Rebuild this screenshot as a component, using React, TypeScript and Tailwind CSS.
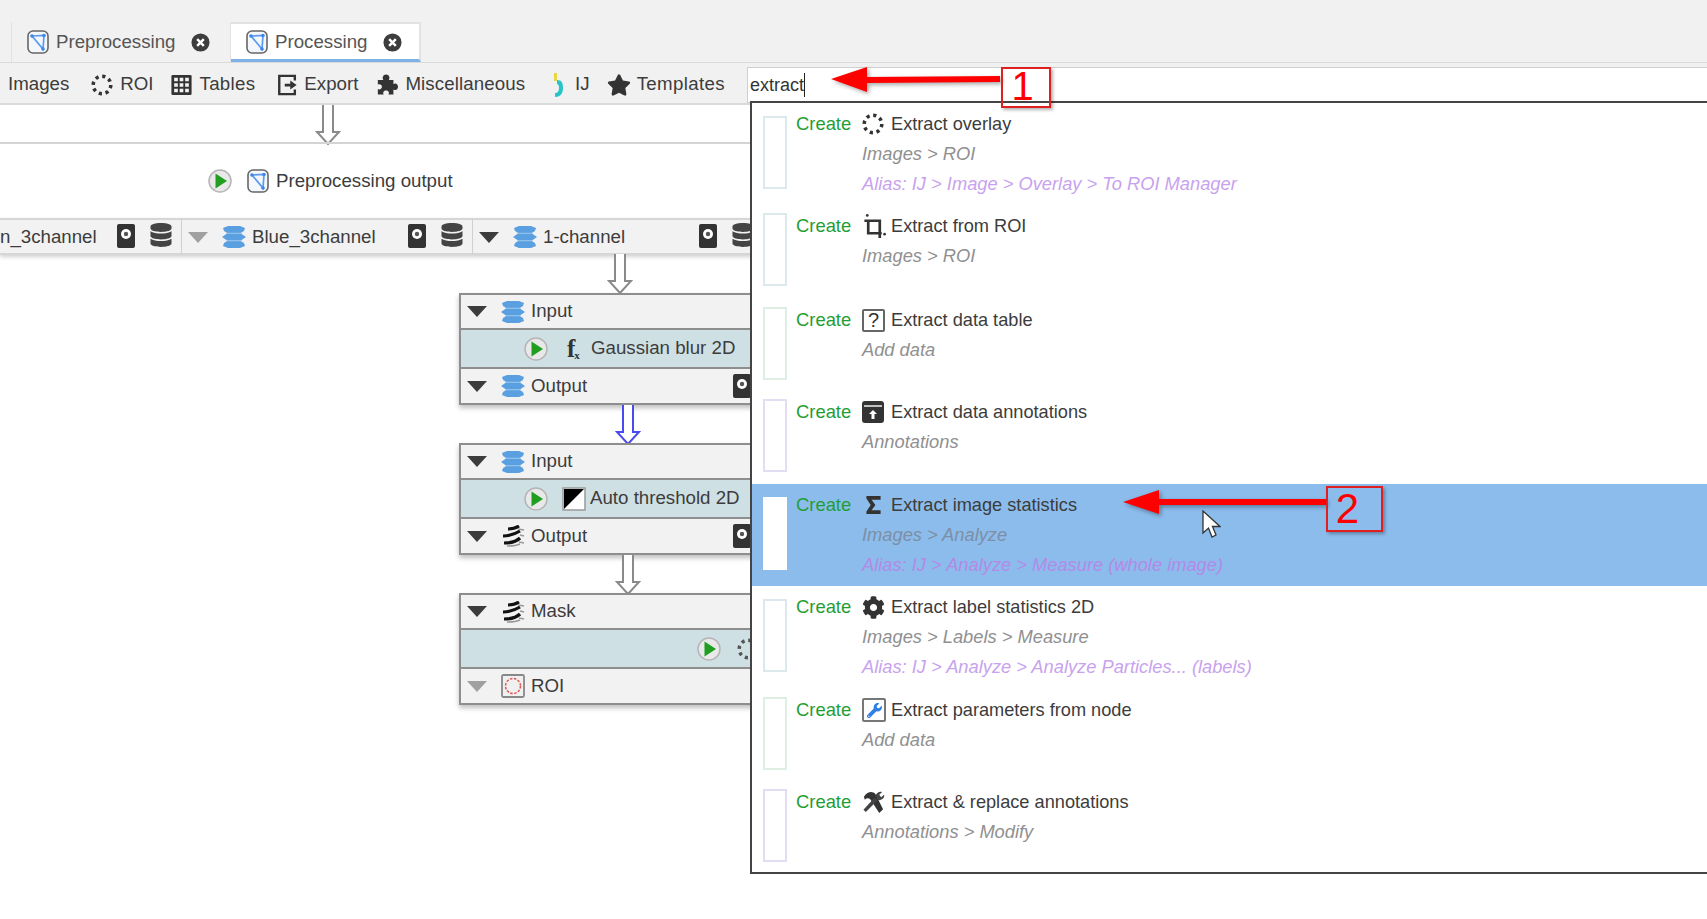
import React from "react";
import { FaDatabase, FaStar, FaCog, FaWrench } from "react-icons/fa";

const FlowIcon = ({ className = "" }: { className?: string }) => (
  <svg viewBox="0 0 24 24" className={`w-6 h-6 shrink-0 ${className}`}>
    <rect x="2" y="1" width="20" height="22" rx="5" fill="#f4f7fb" stroke="#666" strokeWidth="1.6" />
    <path d="M6 6 L18 5.500 L17 19 L6 6 Z" fill="none" stroke="#5b9cf0" strokeWidth="1.7" />
    <circle cx="18" cy="5.500" r="1.800" fill="#3f86e8" />
    <circle cx="6" cy="6" r="1.800" fill="#3f86e8" />
    <circle cx="17" cy="19" r="1.800" fill="#3f86e8" />
  </svg>
);
const Close = () => (
  <svg viewBox="0 0 20 20" className="w-[19px] h-[19px] shrink-0">
    <circle cx="10" cy="10" r="9.500" fill="#3d3d3d" />
    <path d="M6.500 6.500 L13.500 13.500 M13.500 6.500 L6.500 13.500" stroke="#fff" strokeWidth="2.600" />
  </svg>
);
const RoiDots = ({ className = "w-[22px] h-[22px]", color = "#333" }: { className?: string; color?: string }) => (
  <svg viewBox="0 0 22 22" className={`${className} shrink-0`}>
    <circle cx="11" cy="11" r="8.800" fill="none" stroke={color} strokeWidth="3.500" strokeDasharray="3.200 3.700" />
  </svg>
);
const TableIcon = () => (
  <svg viewBox="0 0 22 24" className="w-[21px] h-[22px] shrink-0">
    <rect x="0" y="1" width="22" height="22" rx="1.500" fill="#333" />
    <path d="M3 4h4v4H3zM9 4h4v4H9zM15 4h4v4h-4zM3 10h4v4H3zM9 10h4v4H9zM15 10h4v4h-4zM3 16h4v4H3zM9 16h4v4H9zM15 16h4v4h-4z" fill="#f2f2f2" />
  </svg>
);
const ExportIcon = () => (
  <svg viewBox="0 0 22 24" className="w-[21px] h-[22px] shrink-0">
    <path d="M19 7V2H2v20h17v-5" fill="none" stroke="#333" strokeWidth="2.600" />
    <path d="M8 10.500h6V7l7 5-7 5v-3.500H8z" fill="#333" />
  </svg>
);
const Puzzle = () => (
  <svg viewBox="0 0 24 24" className="w-[22px] h-[23px] shrink-0">
    <path
      d="M2 7 H8 C6.500 4.500 7.500 1 11 1 C14.500 1 15.500 4.500 14 7 H19 V11.500 C21.500 10 24 11.500 24 14.500 C24 17.500 21.500 19 19 17.500 V23 H13.500 C15 20.500 13.500 18.500 11 18.500 C8.500 18.500 7 20.500 8.500 23 H2 V17 C4.500 18 6.500 16.500 6.500 14.500 C6.500 12.500 4.500 11 2 12 Z"
      fill="#333"
    />
  </svg>
);
const IjIcon = () => (
  <svg viewBox="0 0 12 26" className="w-[12px] h-[26px] shrink-0">
    <path d="M2 1h3v8H2z" fill="#e8d840" />
    <path d="M5 8c5 0 6 3 6 8 0 6-3 9-8 9v-4c2 0 4-1 4-5 0-3-1-4-2-4z" fill="#27c4c9" />
  </svg>
);
const Layers = () => (
  <svg viewBox="0 0 24 22" className="w-6 h-[22px] shrink-0">
    <path d="M6 0h12l5 2 -1 3 -4 2.500H6L2 5 1 2z" fill="#5a9fe0" />
    <path d="M5 7.500h14l5 3.500-5 3.500H5l-5-3.500z" fill="#5a9fe0" />
    <path d="M6 14.500h12l4 2.500 1 3-5 2H6l-5-2 1-3z" fill="#5a9fe0" />
    <path d="M4 7.200h16M4 14.800h16" stroke="#9cc6ee" strokeWidth="0.800" />
  </svg>
);
const MaskLayers = () => (
  <svg viewBox="0 0 24 22" className="w-6 h-[22px] shrink-0">
    <path d="M7 4c4 0 8-1 11-3M2 11c6 0 12-2 17-5M3 18c6 0 12-1 16-5" fill="none" stroke="#111" strokeWidth="3.200" />
    <path d="M17 4l6 1M19 10l4 1M18 17l5 1M6 21c5 0 9 0 13-2" fill="none" stroke="#999" strokeWidth="1.400" />
  </svg>
);
const Snapshot = () => (
  <svg viewBox="0 0 18 24" className="w-[18px] h-[24px] shrink-0">
    <rect x="0" y="0" width="18" height="24" rx="2" fill="#333" />
    <circle cx="9" cy="10" r="5" fill="#fff" />
    <circle cx="9" cy="10" r="2.200" fill="#555" />
  </svg>
);
const Play = () => (
  <svg viewBox="0 0 24 24" className="w-6 h-6 shrink-0">
    <circle cx="12" cy="12" r="11" fill="#e9e9e9" stroke="#b5b5b5" strokeWidth="1.500" />
    <path d="M7.500 4.500 L19 12 L7.500 19.500 Z" fill="#1f9e1f" />
  </svg>
);
const Tri = ({ gray = false }: { gray?: boolean }) => (
  <svg viewBox="0 0 20 11" className="w-5 h-[11px] shrink-0">
    <path d="M0 0 H20 L10 11 Z" fill={gray ? "#a0a0a0" : "#3c3c3c"} />
  </svg>
);
const FlowArrow = ({ blue = false, className = "" }: { blue?: boolean; className?: string }) => (
  <svg viewBox="0 0 26 40" className={`w-[26px] h-[40px] ${className}`}>
    <path
      d="M8 0 V27 H2 L13 39 L24 27 H18 V0"
      fill="#fff"
      stroke={blue ? "#4a4af0" : "#8a8a8a"}
      strokeWidth="2"
    />
  </svg>
);
const FxIcon = () => (
  <span className="flex items-end w-[16px] font-['Liberation_Serif',serif] font-bold text-[#333] leading-none">
    <span className="text-[25px]">f</span>
    <span className="text-[11px] -ml-[1px]">x</span>
  </span>
);
const ThresholdIcon = () => (
  <svg viewBox="0 0 24 24" className="w-[24px] h-[24px] shrink-0">
    <rect x="1" y="1" width="22" height="22" fill="#fff" stroke="#999" strokeWidth="1.500" />
    <path d="M2 2 H22 L2 22 Z" fill="#000" />
  </svg>
);
const RoiBox = () => (
  <svg viewBox="0 0 24 24" className="w-[24px] h-[24px] shrink-0">
    <rect x="1" y="1" width="22" height="22" rx="1.500" fill="#f0f0f0" stroke="#888" strokeWidth="1.800" />
    <circle cx="12" cy="12" r="7.500" fill="none" stroke="#e25555" strokeWidth="1.500" strokeDasharray="2.500 1.500" />
  </svg>
);

const Crop = () => (
  <svg viewBox="0 0 24 26" className="w-[24px] h-[25px]">
    <path d="M6 6 V20 H20 M2 7 H18 V25" fill="none" stroke="#333" strokeWidth="2.800" />
    <circle cx="5" cy="1.500" r="1.400" fill="#333" />
    <circle cx="23" cy="21" r="1.400" fill="#333" />
  </svg>
);
const Question = () => (
  <span className="flex items-center justify-center w-[23px] h-[23px] border-2 border-[#666] rounded-[2px] text-[20px] text-[#333]">?</span>
);
const Archive = () => (
  <svg viewBox="0 0 22 22" className="w-[22px] h-[22px]">
    <path d="M3 0h16a3 3 0 0 1 3 3v16a3 3 0 0 1-3 3H3a3 3 0 0 1-3-3V3a3 3 0 0 1 3-3z" fill="#333" />
    <path d="M2 5h18" stroke="#fff" strokeWidth="1.400" />
    <path d="M11 9l-4 4h2.500v5h3v-5H15z" fill="#fff" />
  </svg>
);
const Sigma = () => (
  <svg viewBox="0 0 18 22" className="w-[17px] h-[22px] ml-[3px]">
    <path d="M1.500 1.500H16.500V5.500H7L11 11 7 16.500H16.500V20.500H1.500V18L6 11 1.500 4z" fill="#333" />
  </svg>
);
const WrenchBox = () => (
  <span className="flex items-center justify-center w-[24px] h-[24px] border-2 border-[#777] rounded-[2px] bg-white text-[#2f80e4]">
    <FaWrench size={15} />
  </span>
);
const Tools = () => (
  <svg viewBox="0 0 24 24" className="w-[23px] h-[23px]">
    <path d="M2 6 C6 0 11 0 14 3 L22 19 L18 23 L9 9 C7 7 5 7 3 9 Z" fill="#333" />
    <path d="M16 10 L4 22 L1.500 19.500 L13 7 Z" fill="#444" />
    <path d="M14 5 C15 2 18 0 21 1 L18 4 L20 6.500 L23 4 C24 7 21 10 17 9.500 Z" fill="#444" />
  </svg>
);

type Row = {
  cls: string;
  box: string;
  icon: React.ReactNode;
  name: string;
  path: string;
  alias?: string;
  active?: boolean;
};
const rows: Row[] = [
  { cls: "h-[97px]", box: "border-[#dbe9ec]", icon: <RoiDots />, name: "Extract overlay", path: "Images > ROI", alias: "Alias: IJ > Image > Overlay > To ROI Manager" },
  { cls: "h-[94px]", box: "border-[#dbe9ec]", icon: <Crop />, name: "Extract from ROI", path: "Images > ROI" },
  { cls: "h-[92px]", box: "border-[#dcefe2]", icon: <Question />, name: "Extract data table", path: "Add data" },
  { cls: "h-[98px]", box: "border-[#e2ddf2]", icon: <Archive />, name: "Extract data annotations", path: "Annotations" },
  { cls: "h-[102px] bg-[#8bbcec]", box: "border-white bg-white", icon: <Sigma />, name: "Extract image statistics", path: "Images > Analyze", alias: "Alias: IJ > Analyze > Measure (whole image)", active: true },
  { cls: "h-[98px]", box: "border-[#dbe9ec]", icon: <FaCog size={23} color="#333" />, name: "Extract label statistics 2D", path: "Images > Labels > Measure", alias: "Alias: IJ > Analyze > Analyze Particles... (labels)" },
  { cls: "h-[92px]", box: "border-[#dcefe2]", icon: <WrenchBox />, name: "Extract parameters from node", path: "Add data" },
  { cls: "h-[97px]", box: "border-[#e2ddf2]", icon: <Tools />, name: "Extract & replace annotations", path: "Annotations > Modify" },
];

const NodeHeader = ({ icon, label, tri, snap, h }: { icon: React.ReactNode; label: string; tri?: boolean; snap?: boolean; h: string }) => (
  <div className={`${h} flex items-center pl-[6px] bg-[#f2f2f2]`}>
    <Tri gray={tri} />
    <span className="ml-[14px]">{icon}</span>
    <span className="ml-[6px]">{label}</span>
    {snap && <span className="ml-auto mr-[26px] flex"><Snapshot /></span>}
  </div>
);

const Node = ({ top, children }: { top: string; children: React.ReactNode }) => (
  <div className={`absolute left-[459px] w-[320px] ${top} border-2 border-[#8e8e8e] shadow-[0_3px_5px_rgba(0,0,0,0.25)]`}>
    {children}
  </div>
);
const NodeMid = ({ children }: { children: React.ReactNode }) => (
  <div className="h-[41px] flex items-center bg-[#cfe0e4] border-y-2 border-[#8e8e8e]">{children}</div>
);

const Cell = ({ icon, label, left, tri }: { icon: React.ReactNode; label: string; left: string; tri?: boolean }) => (
  <div className={`absolute top-[114px] h-[36px] flex items-center ${left}`}>
    <Tri gray={tri} />
    <span className="ml-[14px]">{icon}</span>
    <span className="ml-[6px]">{label}</span>
  </div>
);

export default function App() {
  return (
    <div className="relative h-[919px] w-[1707px] overflow-hidden bg-white text-[#3c3c3c] font-['Liberation_Sans',Arial,sans-serif] text-[18.700px]">
      {/* Tabs */}
      <div className="h-[62px] bg-[#f1f1f1] flex items-end pl-[11px]">
        <div className="h-[40px] w-[220px] flex items-center pl-[14px] border-x border-[#e2e2e2]">
          <FlowIcon />
          <span className="ml-[6px] text-[#555]">Preprocessing</span>
          <span className="ml-[16px] flex"><Close /></span>
        </div>
        <div className="h-[40px] w-[190px] flex items-center pl-[14px] pt-[1px] bg-white border-t-2 border-r-2 border-[#e2e2e2] border-b-[3px] border-b-[#7fb2e8]">
          <FlowIcon />
          <span className="ml-[6px] text-[#555]">Processing</span>
          <span className="ml-[16px] flex"><Close /></span>
        </div>
      </div>

      {/* Toolbar */}
      <div className="h-[43px] bg-[#f1f1f1] border-t border-b-2 border-[#dadada] flex items-center pl-[8px] pt-[3px]">
        <span>Images</span>
        <span className="ml-[22px]"><RoiDots /></span>
        <span className="ml-[7px]">ROI</span>
        <span className="ml-[17px]"><TableIcon /></span>
        <span className="ml-[8px] tracking-[0.3px]">Tables</span>
        <span className="ml-[22px]"><ExportIcon /></span>
        <span className="ml-[6px]">Export</span>
        <span className="ml-[18px]"><Puzzle /></span>
        <span className="ml-[7px] tracking-[0.1px]">Miscellaneous</span>
        <span className="ml-[27px]"><IjIcon /></span>
        <span className="ml-[11px]">IJ</span>
        <span className="ml-[17px]"><FaStar size={24} color="#333" /></span>
        <span className="ml-[6px] tracking-[0.35px]">Templates</span>
        <div className="ml-[22px] mr-[-4px] h-[36px] flex-1 bg-white border border-[#cfcfcf] flex items-center pl-[2px] text-[#333]">
          <span className="border-r-[1.500px] border-[#222] leading-[24px] text-[18px]">extract</span>
        </div>
      </div>

      {/* Canvas */}
      <div className="absolute inset-x-0 top-[105px] h-[814px]">
        <FlowArrow className="absolute left-[315px] top-0 h-[36px]" />
        <div className="absolute inset-x-0 top-[37px] h-[2px] bg-[#d4d4d4]" />
        <div className="absolute left-[208px] top-[62px] flex items-center">
          <Play />
          <span className="ml-[14px]"><FlowIcon /></span>
          <span className="ml-[6px]">Preprocessing output</span>
        </div>
        <div className="absolute inset-x-0 top-[113px] h-[37px] bg-[#f2f2f2] border-y-2 border-[#d6d6d6] shadow-[0_2px_4px_rgba(0,0,0,0.18)]" />
        <div className="absolute left-[181px] top-[113px] h-[37px] w-[1px] bg-[#d0d0d0]" />
        <div className="absolute left-[472px] top-[113px] h-[37px] w-[1px] bg-[#d0d0d0]" />
        <span className="absolute left-0 top-[113px] leading-[37px]">n_3channel</span>
        <span className="absolute left-[117px] top-[119px] flex"><Snapshot /></span>
        <span className="absolute left-[149px] top-[118px] flex"><FaDatabase size={24} color="#444" /></span>
        <Cell left="left-[188px]" tri icon={<Layers />} label="Blue_3channel" />
        <span className="absolute left-[408px] top-[119px] flex"><Snapshot /></span>
        <span className="absolute left-[440px] top-[118px] flex"><FaDatabase size={24} color="#444" /></span>
        <Cell left="left-[479px]" icon={<Layers />} label="1-channel" />
        <span className="absolute left-[699px] top-[119px] flex"><Snapshot /></span>
        <span className="absolute left-[731px] top-[118px] flex"><FaDatabase size={24} color="#444" /></span>

        <FlowArrow className="absolute left-[607px] top-[149px]" />
        <Node top="top-[188px]">
          <NodeHeader h="h-[33px]" icon={<Layers />} label="Input" />
          <NodeMid>
            <span className="ml-[63px]"><Play /></span>
            <span className="ml-[19px]"><FxIcon /></span>
            <span className="ml-[8px]">Gaussian blur 2D</span>
          </NodeMid>
          <NodeHeader h="h-[34px]" icon={<Layers />} label="Output" snap />
        </Node>
        <FlowArrow blue className="absolute left-[615px] top-[300px] h-[39px]" />
        <Node top="top-[338px]">
          <NodeHeader h="h-[33px]" icon={<Layers />} label="Input" />
          <NodeMid>
            <span className="ml-[63px]"><Play /></span>
            <span className="ml-[14px]"><ThresholdIcon /></span>
            <span className="ml-[4px]">Auto threshold 2D</span>
          </NodeMid>
          <NodeHeader h="h-[34px]" icon={<MaskLayers />} label="Output" snap />
        </Node>
        <FlowArrow className="absolute left-[615px] top-[450px] h-[39px]" />
        <Node top="top-[488px]">
          <NodeHeader h="h-[33px]" icon={<MaskLayers />} label="Mask" />
          <NodeMid>
            <span className="ml-[236px]"><Play /></span>
            <span className="ml-[16px]"><RoiDots color="#555" /></span>
          </NodeMid>
          <NodeHeader h="h-[34px]" tri icon={<RoiBox />} label="ROI" />
        </Node>
      </div>

      {/* Dropdown */}
      <div className="absolute left-[750px] right-[-4px] top-[101px] h-[773px] bg-white border-2 border-[#444] flex flex-col">
        {rows.map((r) => (
          <div key={r.name} className={`flex items-start shrink-0 ${r.cls}`}>
            <div className={`ml-[11px] mt-[13px] w-[24px] h-[73px] border-2 shrink-0 ${r.box}`} />
            <div className={`ml-[9px] leading-[30px] text-[18.300px] ${r.alias ? "pt-[6px]" : "pt-[11px]"}`}>
              <div className="flex items-center h-[30px]">
                <span className="w-[66px] text-[18.400px] text-[#1f9e35]">Create</span>
                <span className="w-[29px] flex items-center">{r.icon}</span>
                <span className="text-[18.200px] text-[#3c3c3c]">{r.name}</span>
              </div>
              <div className={`pl-[66px] italic ${r.active ? "text-[#7d8fa5]" : "text-[#909090]"}`}>{r.path}</div>
              {r.alias && <div className={`pl-[66px] italic ${r.active ? "text-[#b38ae8]" : "text-[#c8a2ee]"}`}>{r.alias}</div>}
            </div>
          </div>
        ))}
      </div>

      {/* Annotations */}
      <svg className="absolute left-[825px] top-[62px] w-[180px] h-[36px] drop-shadow-[2px_2px_2px_rgba(0,0,0,0.35)]" viewBox="0 0 180 36">
        <path d="M6 17 L42 5 V15 L175 14 V20 L42 21 V30 Z" fill="#f00" />
      </svg>
      <div className="absolute left-[1001px] top-[67px] w-[50px] h-[41px] border-2 border-[#e02020] shadow-[2px_2px_3px_rgba(0,0,0,0.3)] flex items-center justify-center pr-[7px] pb-[4px] text-[#f00] text-[40px] leading-none">1</div>
      <svg className="absolute left-[1118px] top-[485px] w-[212px] h-[36px] drop-shadow-[2px_2px_2px_rgba(0,0,0,0.35)]" viewBox="0 0 212 36">
        <path d="M5 17 L41 5 V14 L208 14 V20 L41 20 V29 Z" fill="#f00" />
      </svg>
      <div className="absolute left-[1326px] top-[486px] w-[57px] h-[46px] border-2 border-[#e02020] shadow-[2px_2px_3px_rgba(0,0,0,0.3)] flex items-center justify-center pr-[14px] text-[#f00] text-[42px] leading-none">2</div>
      <svg className="absolute left-[1202px] top-[510px] w-[19px] h-[29px]" viewBox="0 0 19 29">
        <path d="M1 1 V23 L6.500 18 L10 27 L14 25 L10.500 16.500 H18 Z" fill="#fff" stroke="#333" strokeWidth="1.300" />
      </svg>
    </div>
  );
}
